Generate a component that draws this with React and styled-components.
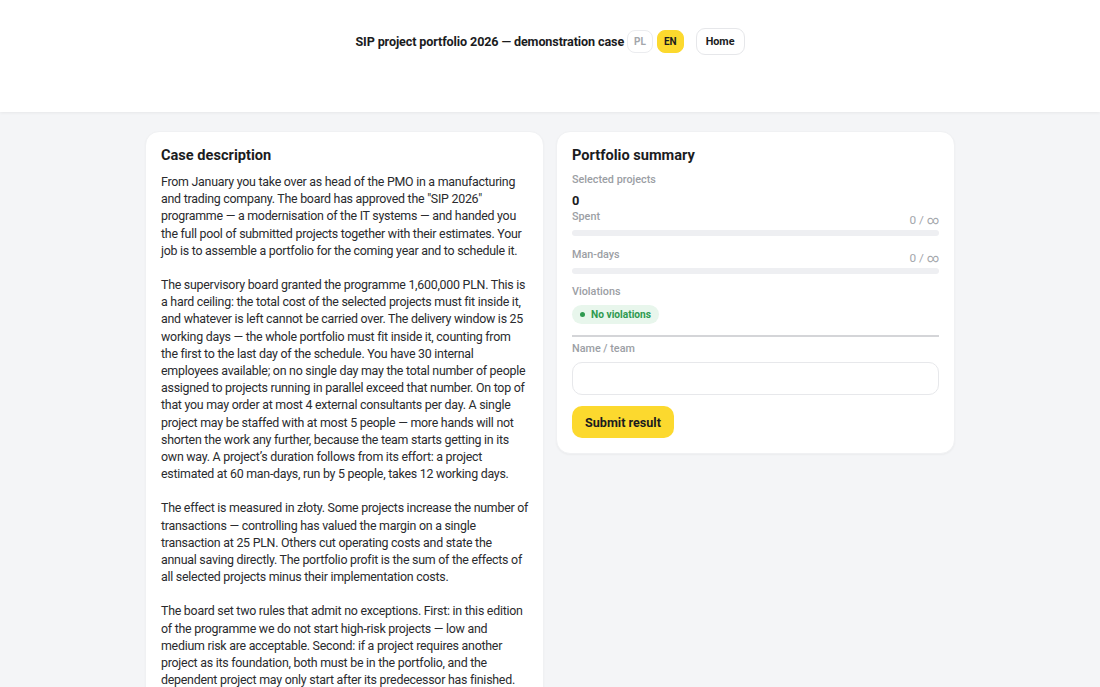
import { Fragment } from "react";
import styled, { createGlobalStyle } from "styled-components";

const GlobalStyle = createGlobalStyle`
  body {
    margin: 0;
    background: #f4f5f7;
    font-family: Roboto, "Noto Sans", sans-serif;
    color: #1b1c1e;
  }
`;

const Header = styled.header`
  height: 112px;
  background: #ffffff;
  box-shadow: 0 1px 3px rgba(0, 0, 0, 0.06);
  display: flex;
  justify-content: center;
  padding-top: 28px;
  box-sizing: border-box;
`;

const HeaderRow = styled.div`
  display: flex;
  align-items: center;
  height: 26px;
`;

const Title = styled.h1`
  font-size: 12.6px;
  font-weight: 700;
  letter-spacing: -0.12px;
  margin: 0 3px 0 0;
`;

const LangPill = styled.button`
  font-family: inherit;
  font-size: 10px;
  font-weight: 700;
  height: 23px;
  padding: 0 6px;
  margin-right: 4px;
  border-radius: 8px;
  border: 1px solid ${(p) => (p.$active ? "#fcd92e" : "#ebecef")};
  background: ${(p) => (p.$active ? "#fcd92e" : "#ffffff")};
  color: ${(p) => (p.$active ? "#1b1c1e" : "#a3a6ab")};
`;

const HomeButton = styled.button`
  font-family: inherit;
  font-size: 10.8px;
  font-weight: 700;
  height: 27px;
  padding: 0 9px;
  margin-left: 8px;
  border-radius: 9px;
  border: 1px solid #e6e7ea;
  background: #ffffff;
  color: #1b1c1e;
`;

const Main = styled.main`
  display: grid;
  grid-template-columns: 399px 399px;
  gap: 12px;
  justify-content: center;
  align-items: start;
  padding-top: 19px;
`;

const Card = styled.section`
  background: #ffffff;
  border-radius: 14px;
  box-shadow: 0 1px 2px rgba(0, 0, 0, 0.04);
  border: 1px solid #f0f1f3;
  padding: 13px 15px 15px;
`;

const CardTitle = styled.h2`
  font-size: 14.6px;
  font-weight: 700;
  margin: 0 0 8px;
  line-height: 20px;
`;

const Paragraph = styled.p`
  font-size: 12.4px;
  letter-spacing: -0.25px;
  line-height: 17.2px;
  color: #2a2b2e;
  margin: 0 -8px 17px 0;
`;

const Label = styled.div`
  font-size: 10.8px;
  font-weight: 500;
  color: #9b9ea4;
  line-height: 14px;
`;

const Count = styled.div`
  font-size: 12.8px;
  font-weight: 700;
  margin-top: 7px;
  line-height: 14px;
`;

const MetricRow = styled.div`
  display: flex;
  justify-content: space-between;
  align-items: flex-end;
  margin-top: ${(p) => p.$top}px;
`;

const MetricValue = styled.span`
  font-size: 11.8px;
  color: #a3a6ab;
  line-height: 14px;
  position: relative;
  top: 3px;
`;

const Bar = styled.div`
  height: 6px;
  border-radius: 3px;
  background: #eeeff2;
  margin-top: 6px;
`;

const Section = styled.div`
  margin-top: ${(p) => p.$top}px;
`;

const OkPill = styled.span`
  display: inline-flex;
  align-items: center;
  gap: 6px;
  margin-top: 6px;
  height: 19px;
  padding: 0 8px;
  border-radius: 10px;
  background: #e8f6ec;
  color: #2f9a50;
  font-size: 10.2px;
  font-weight: 700;
`;

const Dot = styled.span`
  width: 5px;
  height: 5px;
  border-radius: 50%;
  background: #2f9a50;
`;

const Divider = styled.hr`
  border: none;
  border-top: 2px solid #d4d5d8;
  margin: 11px 0 5px;
`;

const Input = styled.input`
  display: block;
  width: 100%;
  box-sizing: border-box;
  height: 33px;
  margin-top: 6px;
  border-radius: 10px;
  border: 1px solid #e7e8eb;
  font-family: inherit;
  font-size: 12px;
  padding: 0 12px;
`;

const Submit = styled.button`
  margin-top: 11px;
  height: 32px;
  padding: 0 13px;
  border: none;
  border-radius: 10px;
  background: #fcd92e;
  font-family: inherit;
  font-size: 12.6px;
  font-weight: 700;
  color: #1b1c1e;
`;

// line breaks kept as in the original layout
const caseText = [
  [
    "From January you take over as head of the PMO in a manufacturing",
    'and trading company. The board has approved the "SIP 2026"',
    "programme — a modernisation of the IT systems — and handed you",
    "the full pool of submitted projects together with their estimates. Your",
    "job is to assemble a portfolio for the coming year and to schedule it.",
  ],
  [
    "The supervisory board granted the programme 1,600,000 PLN. This is",
    "a hard ceiling: the total cost of the selected projects must fit inside it,",
    "and whatever is left cannot be carried over. The delivery window is 25",
    "working days — the whole portfolio must fit inside it, counting from",
    "the first to the last day of the schedule. You have 30 internal",
    "employees available; on no single day may the total number of people",
    "assigned to projects running in parallel exceed that number. On top of",
    "that you may order at most 4 external consultants per day. A single",
    "project may be staffed with at most 5 people — more hands will not",
    "shorten the work any further, because the team starts getting in its",
    "own way. A project’s duration follows from its effort: a project",
    "estimated at 60 man-days, run by 5 people, takes 12 working days.",
  ],
  [
    "The effect is measured in złoty. Some projects increase the number of",
    "transactions — controlling has valued the margin on a single",
    "transaction at 25 PLN. Others cut operating costs and state the",
    "annual saving directly. The portfolio profit is the sum of the effects of",
    "all selected projects minus their implementation costs.",
  ],
  [
    "The board set two rules that admit no exceptions. First: in this edition",
    "of the programme we do not start high-risk projects — low and",
    "medium risk are acceptable. Second: if a project requires another",
    "project as its foundation, both must be in the portfolio, and the",
    "dependent project may only start after its predecessor has finished.",
  ],
];

export default function App() {
  return (
    <>
      <GlobalStyle />
      <Header>
        <HeaderRow>
          <Title>SIP project portfolio 2026 — demonstration case</Title>
          <LangPill>PL</LangPill>
          <LangPill $active>EN</LangPill>
          <HomeButton>Home</HomeButton>
        </HeaderRow>
      </Header>
      <Main>
        <Card>
          <CardTitle>Case description</CardTitle>
          {caseText.map((lines, i) => (
            <Paragraph key={i}>
              {lines.map((line, j) => (
                <Fragment key={j}>
                  {line}
                  {j < lines.length - 1 && <br />}
                </Fragment>
              ))}
            </Paragraph>
          ))}
        </Card>
        <Card>
          <CardTitle>Portfolio summary</CardTitle>
          <Label>Selected projects</Label>
          <Count>0</Count>
          <MetricRow $top={2}>
            <Label>Spent</Label>
            <MetricValue>0 / ∞</MetricValue>
          </MetricRow>
          <Bar />
          <MetricRow $top={12}>
            <Label>Man-days</Label>
            <MetricValue>0 / ∞</MetricValue>
          </MetricRow>
          <Bar />
          <Section $top={11}>
            <Label>Violations</Label>
            <OkPill>
              <Dot />
              No violations
            </OkPill>
          </Section>
          <Divider />
          <Label>Name / team</Label>
          <Input type="text" />
          <Submit>Submit result</Submit>
        </Card>
      </Main>
    </>
  );
}
